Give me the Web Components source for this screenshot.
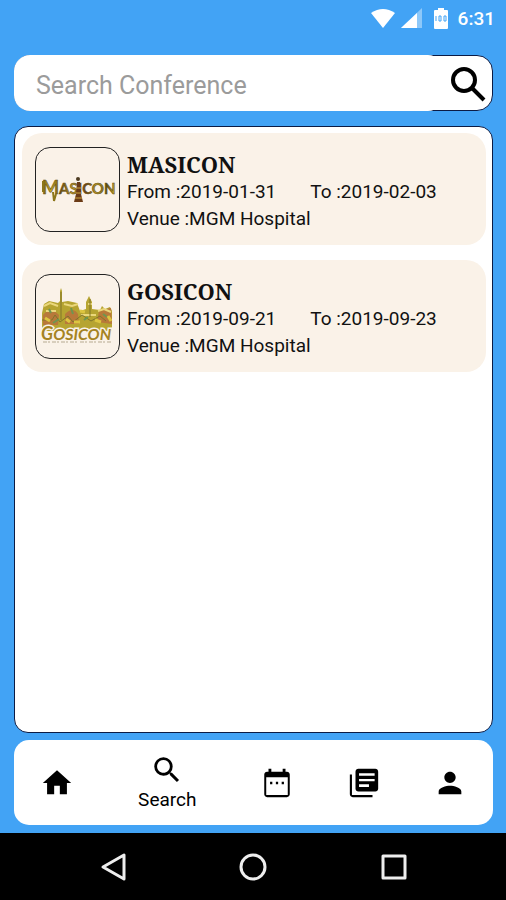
<!DOCTYPE html>
<html lang="en">
<head>
<meta charset="utf-8">
<meta name="viewport" content="width=device-width, initial-scale=1">
<title>Conferences</title>
<style>
    html, body {
        margin: 0;
        background: #42a3f5;
        font-family: Roboto, "Liberation Sans", sans-serif;
        color: #111;
    }
</style>
</head>
<body>

<conference-app>
    <status-bar slot="status" time="6:31"></status-bar>
    <search-box slot="search" placeholder="Search Conference"></search-box>
    <conference-card name="MASICON" from="2019-01-31" to="2019-02-03" venue="MGM Hospital">
        <svg slot="logo" viewBox="0 0 83 83" role="img" aria-label="Masicon logo">
            <defs>
                <linearGradient id="gold" x1="0" y1="0" x2="1" y2="0">
                    <stop offset="0" stop-color="#6f5b12"/>
                    <stop offset=".12" stop-color="#c9ac22"/>
                    <stop offset=".25" stop-color="#6b4f12"/>
                    <stop offset=".42" stop-color="#b8962a"/>
                    <stop offset=".6" stop-color="#6b4312"/>
                    <stop offset=".75" stop-color="#bfa32a"/>
                    <stop offset=".88" stop-color="#5e4c10"/>
                    <stop offset="1" stop-color="#cdb32e"/>
                </linearGradient>
            </defs>
            <text x="6" y="46" fill="url(#gold)" stroke="#5b4811" stroke-width=".5" font-family="Lato, sans-serif" font-weight="bold" font-size="15"><tspan font-size="18">M</tspan>AS<tspan fill="#6b3b16">I</tspan>CON</text>
            <path d="M41 34h3l1 12 2 8h-9l2-8z" fill="#6b3b16"/>
            <path d="M40 40h5M40 45h5M39 50h7" stroke="#d1a943"/>
            <circle cx="42" cy="31" r="2" fill="#4c3b20"/>
            <path d="M17 44l1 9 2-7M7 33v11" fill="none" stroke="#8c7619" stroke-width="2"/>
        </svg>
    </conference-card>
    <conference-card name="GOSICON" from="2019-09-21" to="2019-09-23" venue="MGM Hospital">
        <svg slot="logo" viewBox="0 0 83 83" role="img" aria-label="Gosicon logo">
            <path d="M6 38l2-9 5-3 9 2 2-2V16l1-3 1 3v11l6-1 9 2 3 8 6-2v-7l3-6 3 6v7l8 1 2-4 3 3 5-2 2 4v20H6z" fill="#b6a431"/>
            <path d="M7 40c7-9 12-4 16 0l-1 10H7zM29 39q8-8 13 0l1 10H29zM63 36l12-3 1 16-15-2z" fill="#b8793a"/>
            <path d="M8 31l6-3 8 3M28 29l8 2 6-2M10 36h10M45 40h15M52 29h4M62 36l6-2 7 3" fill="none" stroke="#ead77b" stroke-width="2"/>
            <path d="M6 45h10l3-5 5 7 8-6 5 6 9-7 9 6 9-5 6 5M25 17v28M54 24v18" fill="none" stroke="#80752b"/>
            <path d="M13 34l2 4M35 33l2 6M67 39l4 3M48 45l4-3M17 48l6-4" stroke="#6f9650" stroke-width="2"/>
            <path d="M9 43l5 3M30 44l4 3M44 36l5 1M59 45l6 2M72 41l3 5M38 47h6" stroke="#dcc540" stroke-width="3"/>
            <text x="5" y="65" font-family="Lato, sans-serif" font-weight="bold" font-style="italic" fill="#a58322" stroke="#faf2e8" stroke-width="3" paint-order="stroke" font-size="16"><tspan font-size="18">G</tspan>OSICON</text>
            <path d="M7 67h34M44 67h31" stroke="#b6aa91" stroke-dasharray="4 1 2 2"/>
        </svg>
    </conference-card>
    <tab-bar slot="tabs"></tab-bar>
    <system-bar slot="system"></system-bar>
</conference-app>

<template id="conference-app">
    <style>
        :host {
            display: flex;
            flex-direction: column;
            min-height: 100vh;
        }
        .content {
            flex: 1;
            display: flex;
            flex-direction: column;
            padding: 19px 13px 8px 14px;
        }
        .list {
            flex: 1;
            display: flex;
            flex-direction: column;
            gap: 15px;
            margin: 15px 0 7px;
            padding: 6px 6px 6px 7px;
            background: #fff;
            border: 1px solid #0b1b45;
            border-radius: 14px;
        }
    </style>
    <slot name="status"></slot>
    <div class="content">
        <slot name="search"></slot>
        <main class="list"><slot></slot></main>
        <slot name="tabs"></slot>
    </div>
    <slot name="system"></slot>
</template>

<template id="status-bar">
    <style>
        :host {
            display: flex;
            align-items: center;
            justify-content: flex-end;
            height: 36px;
            padding-right: 11px;
            color: #fff;
            font-size: 19px;
            font-weight: 500;
        }
        svg { fill: currentColor; }
        .signal { margin-left: 5px; }
        .battery { margin: 0 9px 0 11px; }
    </style>
    <svg width="26" height="21" viewBox="0 0 26 21"><path d="M1 5Q13-3 25 5L13 20z"/></svg>
    <svg class="signal" width="21" height="21" viewBox="0 0 21 21"><path d="M21 0v20H0z" opacity=".4"/><path d="M16 5v15H0z"/></svg>
    <svg class="battery" width="16" height="21" viewBox="0 0 16 21">
        <path d="M5 0h6v2h3q1 0 1 1v17q0 1-1 1H2q-1 0-1-1V3q0-1 1-1h3z"/>
        <path d="M3 8v5M6 8h2v5H6zM11 8h2v5h-2z" fill="none" stroke="#42a3f5"/>
    </svg>
    <time></time>
</template>

<template id="search-box">
    <style>
        :host { display: block; }
        form {
            display: flex;
            height: 54px;
            background: #fff;
            border: 1px solid #0b1b45;
            border-radius: 16px;
        }
        input {
            flex: 1;
            min-width: 0;
            margin: -1px 0 -1px -1px;
            padding: 4px 22px 0;
            border: 0;
            border-radius: 16px;
            outline: 0;
            background: #fff;
            color: #111;
            font: 25px Roboto, "Liberation Sans", sans-serif;
        }
        input::placeholder { color: #9b9b9b; opacity: 1; }
        button {
            display: flex;
            align-items: center;
            justify-content: center;
            width: 48px;
            padding: 0;
            border: 0;
            background: none;
        }
    </style>
    <form role="search">
        <input type="search">
        <button type="button" aria-label="Search">
            <svg width="38" height="38" viewBox="0 0 38 38" fill="none" stroke="#000">
                <circle cx="15" cy="16" r="11" stroke-width="4"/>
                <path d="M23 24l12 12" stroke-width="4"/>
            </svg>
        </button>
    </form>
</template>

<template id="conference-card">
    <style>
        :host {
            display: flex;
            align-items: flex-end;
            gap: 7px;
            padding: 14px 13px 13px;
            background: #faf2e8;
            border-radius: 20px;
        }
        .logo {
            flex: none;
            width: 83px;
            height: 83px;
            border: 1px solid #222;
            border-radius: 15px;
        }
        .details {
            flex: 1;
            font-size: 19px;
            line-height: 27px;
        }
        h2, p { margin: 0; }
        h2 {
            font: bold 22px/27px "Noto Serif", "Liberation Serif", serif;
        }
        .dates {
            display: flex;
            gap: 34px;
        }
    </style>
    <div class="logo"><slot name="logo"></slot></div>
    <div class="details">
        <h2></h2>
        <p class="dates"><span class="from"></span><span class="to"></span></p>
        <p class="venue"></p>
    </div>
</template>

<template id="tab-bar">
    <style>
        :host {
            display: block;
            background: #fff;
            border-radius: 15px;
        }
        nav {
            display: flex;
            height: 85px;
        }
        a {
            width: 18%;
            display: flex;
            flex-direction: column;
            align-items: center;
            justify-content: center;
            color: #000;
            font-size: 19px;
            line-height: 26px;
            text-decoration: none;
        }
        a[aria-current] { flex: 1; }
        svg { fill: currentColor; }
    </style>
    <nav></nav>
</template>

<template id="system-bar">
    <style>
        :host {
            display: flex;
            align-items: center;
            justify-content: center;
            gap: 100px;
            height: 67px;
            background: #000;
        }
        button {
            display: flex;
            padding: 4px;
            border: 0;
            background: none;
        }
        svg {
            fill: none;
            stroke: #eee;
            stroke-width: 3;
            stroke-linejoin: round;
        }
    </style>
    <button type="button" aria-label="Back"><svg width="32" height="32" viewBox="0 0 32 32"><path d="M27 4v24L6 16z"/></svg></button>
    <button type="button" aria-label="Home"><svg width="32" height="32" viewBox="0 0 32 32"><circle cx="16" cy="16" r="12"/></svg></button>
    <button type="button" aria-label="Recent apps"><svg width="32" height="32" viewBox="0 0 32 32"><path d="M6 5h22v22H6z"/></svg></button>
</template>

<script>
    const TABS = [
        { name: 'Home', path: 'M10 20v-6h4v6h5v-8h3L12 3 2 12h3v8z' },
        {
            name: 'Search',
            active: true,
            path: 'M15.5 14h-.79l-.28-.27A6.47 6.47 0 0 0 16 9.5 6.5 6.5 0 1 0 9.5 16c1.61 0 3.09-.59 4.23-1.57l.27.28v.79l5 4.99L20.49 19l-4.99-5zm-6 0C7.01 14 5 11.99 5 9.5S7.01 5 9.5 5 14 7.01 14 9.5 11.99 14 9.5 14z'
        },
        {
            name: 'Schedule',
            path: 'M8.7 11.2H7.1v1.6h1.6zm4.1 0h-1.6v1.6h1.6zm4.1 0h-1.6v1.6h1.6zM19 4h-1V2h-2v2H8V2H6v2H5c-1.11 0-1.99.9-1.99 2L3 20c0 1.1.89 2 2 2h14c1.1 0 2-.9 2-2V6c0-1.1-.9-2-2-2zm.6 16.5H4.4V8h15.2z'
        },
        {
            name: 'Library',
            path: 'M3.5 6H2v14c0 1.1.9 2 2 2h14v-1.5H3.5V6zM20 2H8c-1.1 0-2 .9-2 2v12c0 1.1.9 2 2 2h12c1.1 0 2-.9 2-2V4c0-1.1-.9-2-2-2zm-.5 8.8h-11V9.2h11v1.6zm-4 4h-7v-2h7v2zm4-8h-11V5.2h11v1.6z'
        },
        {
            name: 'Profile',
            path: 'M12 12c2.21 0 4-1.79 4-4s-1.79-4-4-4-4 1.79-4 4 1.79 4 4 4zm0 2c-2.67 0-8 1.34-8 4v2h16v-2c0-2.66-5.33-4-8-4z'
        }
    ];

    /**
     * Base element, clones the template named after the tag.
     */
    class TemplateElement extends HTMLElement {
        constructor() {
            super();

            this.attachShadow({ mode: 'open' });
            const template = document.getElementById(this.localName).content;
            this.shadowRoot.appendChild(template.cloneNode(true));
        }

        /**
         * Set the text of a node in the shadow DOM.
         */
        setText(selector, text) {
            this.shadowRoot.querySelector(selector).textContent = text;
        }
    }

    class ConferenceApp extends TemplateElement {}

    class StatusBar extends TemplateElement {
        connectedCallback() {
            this.setText('time', this.getAttribute('time'));
        }
    }

    class SearchBox extends TemplateElement {
        connectedCallback() {
            const $input = this.shadowRoot.querySelector('input');
            $input.placeholder = this.getAttribute('placeholder');
            $input.setAttribute('aria-label', $input.placeholder);
        }
    }

    class ConferenceCard extends TemplateElement {
        connectedCallback() {
            this.setText('h2', this.getAttribute('name'));
            this.setText('.from', `From :${this.getAttribute('from')}`);
            this.setText('.to', `To :${this.getAttribute('to')}`);
            this.setText('.venue', `Venue :${this.getAttribute('venue')}`);
        }
    }

    class TabBar extends TemplateElement {
        connectedCallback() {
            this.shadowRoot.querySelector('nav').innerHTML = TABS.map(this.renderTab).join('');
        }

        /**
         * Only the active tab shows its label.
         */
        renderTab({ name, path, active }) {
            return `
                <a href="#${name.toLowerCase()}" ${active ? 'aria-current="page"' : `aria-label="${name}"`}>
                    <svg width="34" height="34" viewBox="0 0 24 24"><path d="${path}"/></svg>
                    ${active ? `<span>${name}</span>` : ''}
                </a>
            `;
        }
    }

    class SystemBar extends TemplateElement {}

    customElements.define('conference-app', ConferenceApp);
    customElements.define('status-bar', StatusBar);
    customElements.define('search-box', SearchBox);
    customElements.define('conference-card', ConferenceCard);
    customElements.define('tab-bar', TabBar);
    customElements.define('system-bar', SystemBar);
</script>
</body>
</html>
